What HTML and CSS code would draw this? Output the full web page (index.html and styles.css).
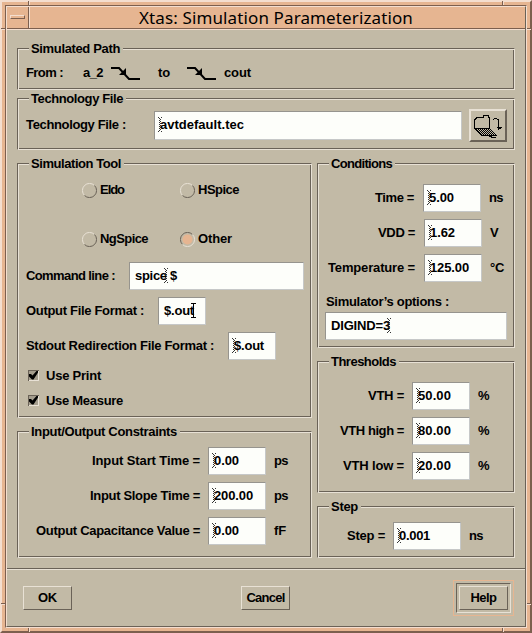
FILE: index.html
```html
<!DOCTYPE html>
<html lang="en">
<head>
<meta charset="utf-8">
<title>Xtas: Simulation Parameterization</title>
<link rel="stylesheet" href="styles.css">
</head>
<body>
<svg class="defs" width="0" height="0">
  <defs>
    <pattern id="stipple" width="2" height="2" patternUnits="userSpaceOnUse"><path d="M0 0h1v1H0zM1 1h1v1H1z"/></pattern>
    <symbol id="caret" viewBox="0 0 4 15"><path fill="#333" d="M0 0h1v1H0zM3 0h1v1H3zM1 1h1v1H1zM2 2h1v1H2zM1 3h1v1H1zM2 4h1v1H2zM1 5h1v1H1zM2 6h1v1H2zM1 7h1v1H1zM2 8h1v1H2zM1 9h1v1H1zM2 10h1v1H2zM1 11h1v1H1zM2 12h1v1H2zM1 13h1v1H1zM0 14h1v1H0zM3 14h1v1H3z"/></symbol>
    <symbol id="fall" viewBox="0 0 29 13"><path fill="none" stroke="#000" stroke-width="2" d="M0 1h8l10 11h11"/><path d="M15 1v7H8l3-3z"/></symbol>
    <symbol id="radio" viewBox="0 0 15 15"><path class="r-a" fill="none" d="M2.500 12.500A7 7 0 0 1 12.500 2.500"/><path class="r-b" fill="none" d="M12.500 2.500A7 7 0 0 1 2.500 12.500"/></symbol>
    <symbol id="check" viewBox="0 0 11 11"><path d="M1 4h2l1.500 1.500L8.500 1H10v1.500L5.500 9.500H4L1 6.500z"/></symbol>
  </defs>
</svg>
<div class="window">
  <i class="notch v top left"></i><i class="notch v top right"></i><i class="notch v bottom left"></i><i class="notch v bottom right"></i>
  <i class="notch h top left"></i><i class="notch h top right"></i><i class="notch h bottom left"></i><i class="notch h bottom right"></i>
  <div class="bevel"><div class="inner">
    <header class="titlebar"><div class="menu"><i class="dash"></i></div><h1><span data-w="274">Xtas: Simulation Parameterization</span></h1></header>
    <main class="content">
      <section class="group path"><h2><span data-w="89">Simulated Path</span></h2>
        <span class="from" data-w="37">From :</span><span class="node" data-w="20">a_2</span><svg class="edge"><use href="#fall"/></svg><span class="to" data-w="12">to</span><svg class="edge second"><use href="#fall"/></svg><span class="cout" data-w="27">cout</span>
      </section>
      <section class="group tech"><h2><span data-w="92">Technology File</span></h2>
        <label class="tech-label"><span data-w="100">Technology File :</span></label>
        <div class="field file"><span data-w="84">avtdefault.tec</span><svg class="caret"><use href="#caret"/></svg></div>
        <button class="browse" aria-label="Browse"><svg width="32" height="26" viewBox="0 0 32 26" shape-rendering="crispEdges"><path fill="none" stroke="#000" d="M3.500 15.500h-1v-9h1v-1h1v-1h7v-2h5v2h1v11M2.500 15.500h15M2.500 15.500l7 7h9M17.500 15.500l6 6v1M17 23.500h2v1h5M19 22.500h5v-1"/><path fill="url(#stipple)" d="M3 15h15l6 8H10z"/><path fill="none" stroke="#000" d="M21 6.500h1M22 5.500h3M25 6.500h2M26.500 7v10M24.500 14.500h5M25.500 15.500h3"/></svg></button>
      </section>
      <div class="columns">
        <div class="column">
          <section class="group tool"><h2><span data-w="90">Simulation Tool</span></h2>
            <div class="radios">
              <label><svg class="radio"><use href="#radio"/></svg><span data-w="24">Eldo</span></label>
              <label><svg class="radio"><use href="#radio"/></svg><span data-w="41">HSpice</span></label>
              <label><svg class="radio"><use href="#radio"/></svg><span data-w="48">NgSpice</span></label>
              <label><svg class="radio on"><circle cx="7.500" cy="7.500" r="5"/><use href="#radio"/></svg><span data-w="34">Other</span></label>
            </div>
            <div class="row command"><span data-w="89">Command line :</span><div class="field"><span data-w="42">spice $</span><svg class="caret mid"><use href="#caret"/></svg></div></div>
            <div class="row output"><span data-w="118">Output File Format :</span><div class="field"><span data-w="30">$.out</span><svg class="ibeam" viewBox="0 0 5 15"><path fill="none" stroke="#000" d="M0 .5h5M2.500 0v15M0 14.500h5"/></svg></div></div>
            <div class="row stdout"><span data-w="188">Stdout Redirection File Format :</span><div class="field"><span data-w="30">$.out</span><svg class="caret"><use href="#caret"/></svg></div></div>
            <label class="check-row"><span class="box"><svg width="11" height="11"><use href="#check"/></svg></span><span data-w="55">Use Print</span></label>
            <label class="check-row"><span class="box"><svg width="11" height="11"><use href="#check"/></svg></span><span data-w="77">Use Measure</span></label>
          </section>
          <section class="group io"><h2><span data-w="146">Input/Output Constraints</span></h2>
            <div class="row"><label><span data-w="108">Input Start Time =</span></label><div class="field"><span data-w="25">0.00</span><svg class="caret"><use href="#caret"/></svg></div><span data-w="14">ps</span></div>
            <div class="row"><label><span data-w="110">Input Slope Time =</span></label><div class="field"><span data-w="39">200.00</span><svg class="caret"><use href="#caret"/></svg></div><span data-w="14">ps</span></div>
            <div class="row"><label><span data-w="164">Output Capacitance Value =</span></label><div class="field"><span data-w="25">0.00</span><svg class="caret"><use href="#caret"/></svg></div><span data-w="12">fF</span></div>
          </section>
        </div>
        <div class="column">
          <section class="group conditions"><h2><span data-w="61">Conditions</span></h2>
            <div class="row time"><label><span data-w="39">Time =</span></label><div class="field"><span data-w="25">5.00</span><svg class="caret"><use href="#caret"/></svg></div><span data-w="14">ns</span></div>
            <div class="row"><label><span data-w="37">VDD =</span></label><div class="field"><span data-w="25">1.62</span><svg class="caret"><use href="#caret"/></svg></div><span data-w="9">V</span></div>
            <div class="row"><label><span data-w="87">Temperature =</span></label><div class="field"><span data-w="39">125.00</span><svg class="caret"><use href="#caret"/></svg></div><span data-w="14">°C</span></div>
            <div class="options-label"><span data-w="123">Simulator’s options :</span></div>
            <div class="field options"><span data-w="59">DIGIND=3</span><svg class="caret end"><use href="#caret"/></svg></div>
          </section>
          <section class="group thresholds"><h2><span data-w="65">Thresholds</span></h2>
            <div class="row"><label><span data-w="36">VTH =</span></label><div class="field"><span data-w="33">50.00</span><svg class="caret"><use href="#caret"/></svg></div><span data-w="12">%</span></div>
            <div class="row"><label><span data-w="64">VTH high =</span></label><div class="field"><span data-w="33">80.00</span><svg class="caret"><use href="#caret"/></svg></div><span data-w="12">%</span></div>
            <div class="row"><label><span data-w="61">VTH low =</span></label><div class="field"><span data-w="33">20.00</span><svg class="caret"><use href="#caret"/></svg></div><span data-w="12">%</span></div>
          </section>
          <section class="group step"><h2><span data-w="27">Step</span></h2>
            <div class="row"><label><span data-w="38">Step =</span></label><div class="field"><span data-w="31">0.001</span><svg class="caret"><use href="#caret"/></svg></div><span data-w="14">ns</span></div>
          </section>
        </div>
      </div>
    </main>
    <footer class="actions">
      <button class="btn ok"><span data-w="19">OK</span></button>
      <button class="btn cancel"><span data-w="38">Cancel</span></button>
      <div class="focus"><div class="default"><button class="btn help"><span data-w="26">Help</span></button></div></div>
    </footer>
  </div></div>
</div>
<script src="fit.js"></script>
</body>
</html>
```
FILE: styles.css
```css
:root {
  --bg: #c2baa6;
  --dark: #6a6257;
  --light: #e8e1d5;
  --peach: #e6b591;
  --frame-light: #f4decf;
  --frame-dark: #7c5f4e;
}
* { box-sizing: border-box; }
body { margin: 0; background: var(--peach); color: #000; font: bold 13px/15px "Liberation Sans", Arial, sans-serif; }
h1, h2 { margin: 0; font: inherit; }
button { font: inherit; color: inherit; border-radius: 0; padding: 0; margin: 0; }
svg { display: block; }
.defs { position: absolute; }
span[data-w] { display: block; flex: none; white-space: pre; }

.window { position: relative; width: 532px; height: 633px; padding: 3px; background: var(--peach); border: 2px solid; border-color: var(--frame-light) var(--frame-dark) var(--frame-dark) var(--frame-light); }
.bevel { height: 623px; border: 1px solid; border-color: var(--frame-dark) var(--frame-light) var(--frame-light) var(--frame-dark); }
.inner { height: 621px; background: var(--bg); border: 1px solid; border-color: var(--frame-light) var(--dark) var(--dark) var(--frame-light); }
.notch { position: absolute; background: var(--frame-light); }
.notch.v { width: 2px; height: 4px; border-left: 1px solid var(--frame-dark); }
.notch.h { width: 4px; height: 2px; border-top: 1px solid var(--frame-dark); }
.notch.v.top { top: -1px; }
.notch.v.bottom { bottom: -1px; }
.notch.v.left { left: 26px; }
.notch.v.right { left: 500px; }
.notch.h.left { left: -1px; }
.notch.h.right { right: -1px; }
.notch.h.top { top: 26px; }
.notch.h.bottom { top: 601px; }

.titlebar { display: flex; height: 23px; background: var(--peach); border-bottom: 1px solid var(--frame-light); box-shadow: inset 0 -1px var(--frame-dark); }
.menu { width: 23px; height: 21px; padding: 8px 0 0 3px; border-right: 1px solid var(--frame-light); box-shadow: inset -1px 0 var(--frame-dark); }
.dash { display: block; width: 15px; height: 4px; border: 1px solid; border-color: var(--frame-light) var(--frame-dark) var(--frame-dark) var(--frame-light); }
h1 { padding-left: 109px; font: 17px/22px "Noto Sans", sans-serif; }

.content { padding: 18px 10px 0; }
.group { position: relative; border: 1px solid; border-color: var(--dark) var(--light) var(--light) var(--dark); box-shadow: inset 1px 1px var(--light), inset -1px -1px var(--dark); }
.group h2 { position: absolute; left: 11px; top: -8px; padding: 0 3px 0 2px; background: var(--bg); }
.path { display: flex; height: 42px; padding: 16px 0 0 8px; }
.edge { width: 29px; height: 13px; margin: 2px 0 0 8px; }
.node { margin-left: 20px; }
.to { margin-left: 18px; }
.edge.second { margin-left: 17px; }
.cout { margin-left: 8px; }

.tech { display: flex; height: 52px; margin-top: 8px; padding: 12px 0 0 8px; }
.tech-label { width: 128px; padding-top: 6px; }
.field { position: relative; flex: none; height: 28px; padding: 5px 0 0 5px; background: #fdfefa; border: 1px solid; border-color: #96948e #c6c8c8 #c6c8c8 #96948e; }
.file { width: 308px; height: 29px; }
.browse { width: 38px; height: 33px; margin: -2px 0 0 7px; padding: 1px; background: var(--bg); border: 2px solid; border-color: var(--light) var(--dark) var(--dark) var(--light); }
.caret { position: absolute; left: 3px; top: 5px; width: 4px; height: 15px; }
.caret.mid { left: 34px; }
.caret.end { left: 61px; }
.ibeam { position: absolute; left: 32px; top: 5px; width: 5px; height: 15px; }

.columns { display: flex; gap: 5px; margin-top: 13px; }
.column { display: flex; flex-direction: column; gap: 13px; width: 295px; }
.column + .column { width: 198px; }
.row { display: flex; align-items: baseline; height: 28px; margin-bottom: 7px; }
.row label { display: flex; justify-content: flex-end; }

.tool { height: 255px; padding: 19px 0 0 8px; }
.radios { display: grid; grid-template-columns: 98px 98px; row-gap: 34px; padding-left: 56px; margin-bottom: 15px; }
.radios label { display: flex; gap: 3px; }
.radios span { line-height: 14px; }
.radio { width: 15px; height: 15px; }
.r-a { stroke: var(--a, #e8e1d5); }
.r-b { stroke: var(--b, #6a6257); }
.radio.on { --a: #6a6257; --b: #e8e1d5; fill: var(--peach); }
.command { gap: 14px; }
.command .field { width: 175px; }
.output { gap: 14px; }
.stdout { gap: 14px; }
.output .field, .stdout .field { width: 48px; }
.check-row { display: flex; gap: 7px; height: 15px; margin: 1px 0 10px 2px; }
.stdout { margin-bottom: 8px; }
.check-row + .check-row { margin: 0 0 0 2px; }
.box { width: 11px; height: 11px; margin-top: 2px; background: #a49d8d; box-shadow: inset 1px 1px var(--dark), inset -1px -1px var(--light); }

.io { height: 127px; padding-top: 15px; }
.io label { width: 182px; margin-right: 8px; }
.io .field { width: 58px; margin-right: 8px; }
.conditions { height: 185px; padding-top: 20px; }
.conditions label { width: 97px; margin-right: 9px; }
.conditions .time label { width: 96px; }
.conditions .row .field { width: 58px; margin-right: 8px; }
.options-label { padding: 5px 0 3px 8px; }
.options { width: 182px; margin-left: 7px; }
.thresholds { height: 132px; padding-top: 20px; }
.thresholds label { width: 86px; margin-right: 8px; }
.thresholds .field { width: 58px; margin-right: 8px; }
.step { height: 52px; padding-top: 15px; }
.step label { width: 67px; margin-right: 8px; }
.step .field { width: 68px; margin-right: 8px; }

.actions { display: flex; align-items: center; height: 58px; margin-top: 10px; padding: 0 0 0 16px; border-top: 1px solid var(--dark); box-shadow: inset 0 1px var(--light); }
.btn { display: flex; justify-content: center; align-items: center; width: 49px; height: 24px; background: var(--bg); border: 1px solid; border-color: var(--light) var(--dark) var(--dark) var(--light); }
.cancel { margin-left: 169px; }
.focus { margin-left: 163px; padding: 2px; border: 1px solid var(--peach); }
.default { padding: 2px; border: 1px solid; border-color: var(--dark) var(--light) var(--light) var(--dark); }
.help { width: 49px; }
```
FILE: fit.js
```js
// Space each label's letters so that it fills its design width.
document.querySelectorAll('span[data-w]').forEach(function (el) {
  var target = Number(el.dataset.w);
  var range = document.createRange();
  range.selectNodeContents(el);
  var natural = range.getBoundingClientRect().width;
  el.style.letterSpacing = (target - natural) / el.textContent.length + 'px';
  el.style.width = target + 'px';
});
```
